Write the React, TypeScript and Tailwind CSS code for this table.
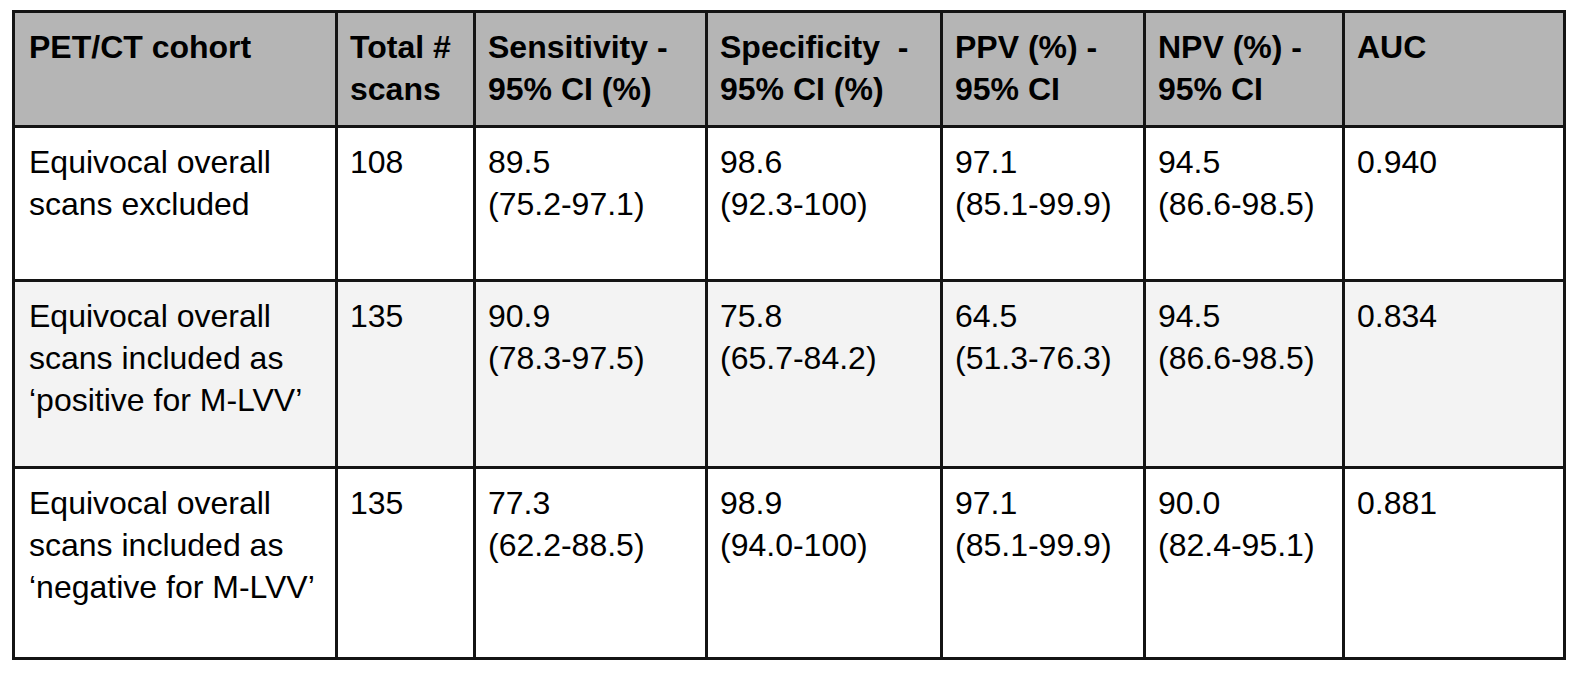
import React from 'react';

const cols = ['w-[320px]', 'w-[135px]', 'w-[229px]', 'w-[232px]', 'w-[200px]', 'w-[196px]', 'w-[218px]'];
const pads = ['pl-[14px]', 'pl-[12px]', 'pl-[12px]', 'pl-[12px]', 'pl-[12px]', 'pl-[12px]', 'pl-[12px]'];

const header = [
  ['PET/CT cohort'],
  ['Total #', 'scans'],
  ['Sensitivity -', '95% CI (%)'],
  ['Specificity\u00a0 -', '95% CI (%)'],
  ['PPV (%) -', '95% CI'],
  ['NPV (%) -', '95% CI'],
  ['AUC'],
];

const rows: { h: string; bg: string; cells: string[][] }[] = [
  {
    h: 'h-[151px]',
    bg: 'bg-white',
    cells: [
      ['Equivocal overall', 'scans excluded'],
      ['108'],
      ['89.5', '(75.2-97.1)'],
      ['98.6', '(92.3-100)'],
      ['97.1', '(85.1-99.9)'],
      ['94.5', '(86.6-98.5)'],
      ['0.940'],
    ],
  },
  {
    h: 'h-[184px]',
    bg: 'bg-[#f3f3f3]',
    cells: [
      ['Equivocal overall', 'scans included as', '\u2018positive for M-LVV\u2019'],
      ['135'],
      ['90.9', '(78.3-97.5)'],
      ['75.8', '(65.7-84.2)'],
      ['64.5', '(51.3-76.3)'],
      ['94.5', '(86.6-98.5)'],
      ['0.834'],
    ],
  },
  {
    h: 'h-[188px]',
    bg: 'bg-white',
    cells: [
      ['Equivocal overall', 'scans included as', '\u2018negative for M-LVV\u2019'],
      ['135'],
      ['77.3', '(62.2-88.5)'],
      ['98.9', '(94.0-100)'],
      ['97.1', '(85.1-99.9)'],
      ['90.0', '(82.4-95.1)'],
      ['0.881'],
    ],
  },
];

function Lines({ lines }: { lines: string[] }) {
  return (
    <>
      {lines.map((l, i) => (
        <div key={i} className="whitespace-pre">{l}</div>
      ))}
    </>
  );
}

export default function App() {
  return (
    <div className="min-h-screen bg-white pt-[10px] pl-[12px] font-['Liberation_Sans',Arial,sans-serif] text-[32px] leading-[42px] text-black">
      <div className="inline-flex flex-col gap-[3px] bg-[#141414] p-[3px]">
        <div className="flex gap-[3px] h-[112px]">
          {header.map((c, i) => (
            <div key={i} className={`${cols[i]} ${pads[i]} bg-[#b5b5b5] pt-[13px] font-bold`}>
              <Lines lines={c} />
            </div>
          ))}
        </div>
        {rows.map((r, ri) => (
          <div key={ri} className={`flex gap-[3px] ${r.h}`}>
            {r.cells.map((c, i) => (
              <div key={i} className={`${cols[i]} ${pads[i]} ${r.bg} pt-[13px]`}>
                <Lines lines={c} />
              </div>
            ))}
          </div>
        ))}
      </div>
    </div>
  );
}
